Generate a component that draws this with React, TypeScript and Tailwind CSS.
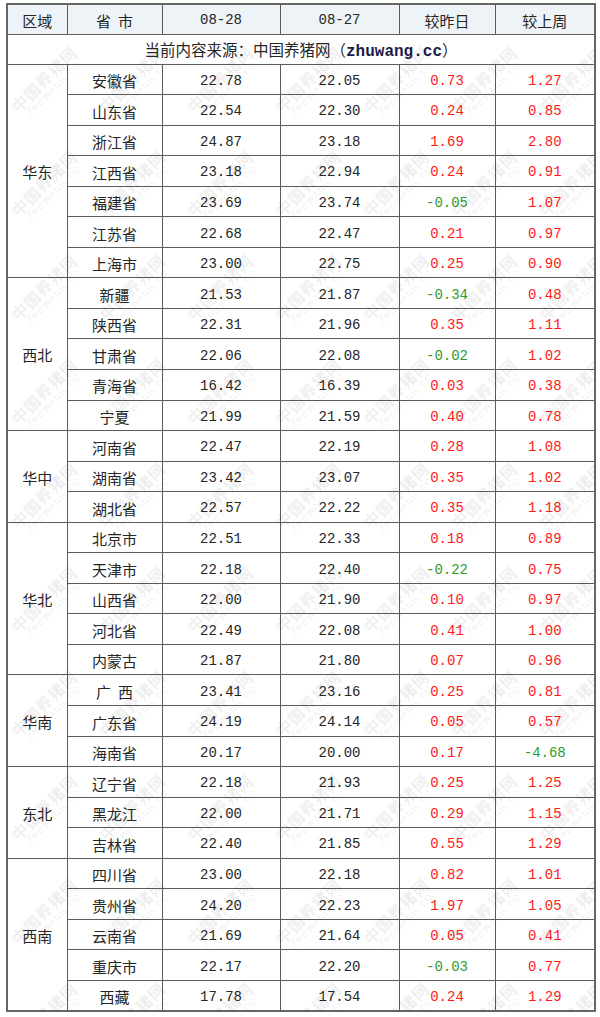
import React from "react";

type Row = [string, string, string, string, string];
type Group = { region: string; rows: Row[] };

const groups: Group[] = [
  {
    region: "华东",
    rows: [
      ["安徽省", "22.78", "22.05", "0.73", "1.27"],
      ["山东省", "22.54", "22.30", "0.24", "0.85"],
      ["浙江省", "24.87", "23.18", "1.69", "2.80"],
      ["江西省", "23.18", "22.94", "0.24", "0.91"],
      ["福建省", "23.69", "23.74", "-0.05", "1.07"],
      ["江苏省", "22.68", "22.47", "0.21", "0.97"],
      ["上海市", "23.00", "22.75", "0.25", "0.90"],
    ],
  },
  {
    region: "西北",
    rows: [
      ["新疆", "21.53", "21.87", "-0.34", "0.48"],
      ["陕西省", "22.31", "21.96", "0.35", "1.11"],
      ["甘肃省", "22.06", "22.08", "-0.02", "1.02"],
      ["青海省", "16.42", "16.39", "0.03", "0.38"],
      ["宁夏", "21.99", "21.59", "0.40", "0.78"],
    ],
  },
  {
    region: "华中",
    rows: [
      ["河南省", "22.47", "22.19", "0.28", "1.08"],
      ["湖南省", "23.42", "23.07", "0.35", "1.02"],
      ["湖北省", "22.57", "22.22", "0.35", "1.18"],
    ],
  },
  {
    region: "华北",
    rows: [
      ["北京市", "22.51", "22.33", "0.18", "0.89"],
      ["天津市", "22.18", "22.40", "-0.22", "0.75"],
      ["山西省", "22.00", "21.90", "0.10", "0.97"],
      ["河北省", "22.49", "22.08", "0.41", "1.00"],
      ["内蒙古", "21.87", "21.80", "0.07", "0.96"],
    ],
  },
  {
    region: "华南",
    rows: [
      ["广 西", "23.41", "23.16", "0.25", "0.81"],
      ["广东省", "24.19", "24.14", "0.05", "0.57"],
      ["海南省", "20.17", "20.00", "0.17", "-4.68"],
    ],
  },
  {
    region: "东北",
    rows: [
      ["辽宁省", "22.18", "21.93", "0.25", "1.25"],
      ["黑龙江", "22.00", "21.71", "0.29", "1.15"],
      ["吉林省", "22.40", "21.85", "0.55", "1.29"],
    ],
  },
  {
    region: "西南",
    rows: [
      ["四川省", "23.00", "22.18", "0.82", "1.01"],
      ["贵州省", "24.20", "22.23", "1.97", "1.05"],
      ["云南省", "21.69", "21.64", "0.05", "0.41"],
      ["重庆市", "22.17", "22.20", "-0.03", "0.77"],
      ["西藏", "17.78", "17.54", "0.24", "1.29"],
    ],
  },
];

const cjk = "font-['Noto_Sans_CJK_SC','Noto_Sans',sans-serif]";
const mono = "font-['Liberation_Mono','DejaVu_Sans_Mono',monospace]";

function Name({ text }: { text: string }) {
  if (text.includes(" ")) {
    const [a, b] = text.split(" ");
    return (
      <span>
        {a}
        <span className="inline-block w-[7px]" />
        {b}
      </span>
    );
  }
  return <span>{text}</span>;
}

function Change({ v }: { v: string }) {
  const neg = v.startsWith("-");
  return <span className={neg ? "text-[#2f9a2f]" : "text-[#ff1a1a]"}>{v}</span>;
}

function Watermarks() {
  const items: { x: number; y: number }[] = [];
  for (let j = 0; j < 10; j++) {
    for (let i = 0; i < 7; i++) {
      items.push({ x: -6 + i * 88, y: 66 + j * 104 });
    }
  }
  return (
    <div aria-hidden="true" className="pointer-events-none absolute inset-0 select-none overflow-hidden">
      {items.map((p, k) => (
        <div
          key={k}
          className="absolute flex w-[96px] -rotate-45 flex-col items-center whitespace-nowrap"
          style={{ left: p.x, top: p.y }}
        >
          <span className={`${cjk} whitespace-nowrap text-[16px] font-bold leading-[17px] tracking-[1px] text-[rgba(0,0,0,0.085)]`}>
            中国养猪网
          </span>
          <span className="whitespace-nowrap font-['Liberation_Sans',sans-serif] text-[9px] leading-[11px] tracking-[1px] text-[rgba(0,0,0,0.09)]">
            ZHUWANG.CC
          </span>
        </div>
      ))}
    </div>
  );
}

export default function App() {
  const cell = "border border-[#5c5c5c] p-0 text-center align-middle";
  return (
    <div className="min-h-[1017px] w-[600px] bg-white pl-[6px] pt-[3px] text-[#262626]">
      <div className="relative w-[588px]">
        <table className="w-[588px] table-fixed border-collapse border-2 border-[#666]">
          <colgroup>
            <col className="w-[60px]" />
            <col className="w-[95px]" />
            <col className="w-[118px]" />
            <col className="w-[119px]" />
            <col className="w-[96px]" />
            <col className="w-[100px]" />
          </colgroup>
          <thead>
            <tr className="h-[30px] bg-[#eef3f8]">
              <th className={`${cell} pt-[3px] ${cjk} text-[15px] font-normal`}>区域</th>
              <th className={`${cell} pt-[3px] ${cjk} text-[15px] font-normal`}>
                <Name text="省 市" />
              </th>
              <th className={`${cell} pt-[3px] ${mono} text-[14px] font-normal`}>08-28</th>
              <th className={`${cell} pt-[3px] ${mono} text-[14px] font-normal`}>08-27</th>
              <th className={`${cell} pt-[3px] ${cjk} text-[15px] font-normal`}>较昨日</th>
              <th className={`${cell} pt-[3px] ${cjk} text-[15px] font-normal`}>较上周</th>
            </tr>
          </thead>
          <tbody>
            <tr className="h-[29px]">
              <td colSpan={6} className={`${cell} pt-[3px] ${cjk} text-[15.5px]`}>
                当前内容来源：中国养猪网（
                <span className={`${mono} text-[16px] font-bold text-[#1c1c48]`}>zhuwang.cc</span>）
              </td>
            </tr>
            {groups.map((g) =>
              g.rows.map((r, idx) => (
                <tr key={g.region + idx} className="h-[30.55px]">
                  {idx === 0 && (
                    <td rowSpan={g.rows.length} className={`${cell} pt-[3px] ${cjk} text-[15px]`}>
                      {g.region}
                    </td>
                  )}
                  <td className={`${cell} pt-[4px] ${cjk} text-[15px]`}>
                    <Name text={r[0]} />
                  </td>
                  <td className={`${cell} pt-[4px] ${mono} text-[14px]`}>{r[1]}</td>
                  <td className={`${cell} pt-[4px] ${mono} text-[14px]`}>{r[2]}</td>
                  <td className={`${cell} pt-[4px] ${mono} text-[14px]`}>
                    <Change v={r[3]} />
                  </td>
                  <td className={`${cell} pt-[4px] ${mono} text-[14px]`}>
                    <Change v={r[4]} />
                  </td>
                </tr>
              ))
            )}
          </tbody>
        </table>
        <Watermarks />
      </div>
    </div>
  );
}
